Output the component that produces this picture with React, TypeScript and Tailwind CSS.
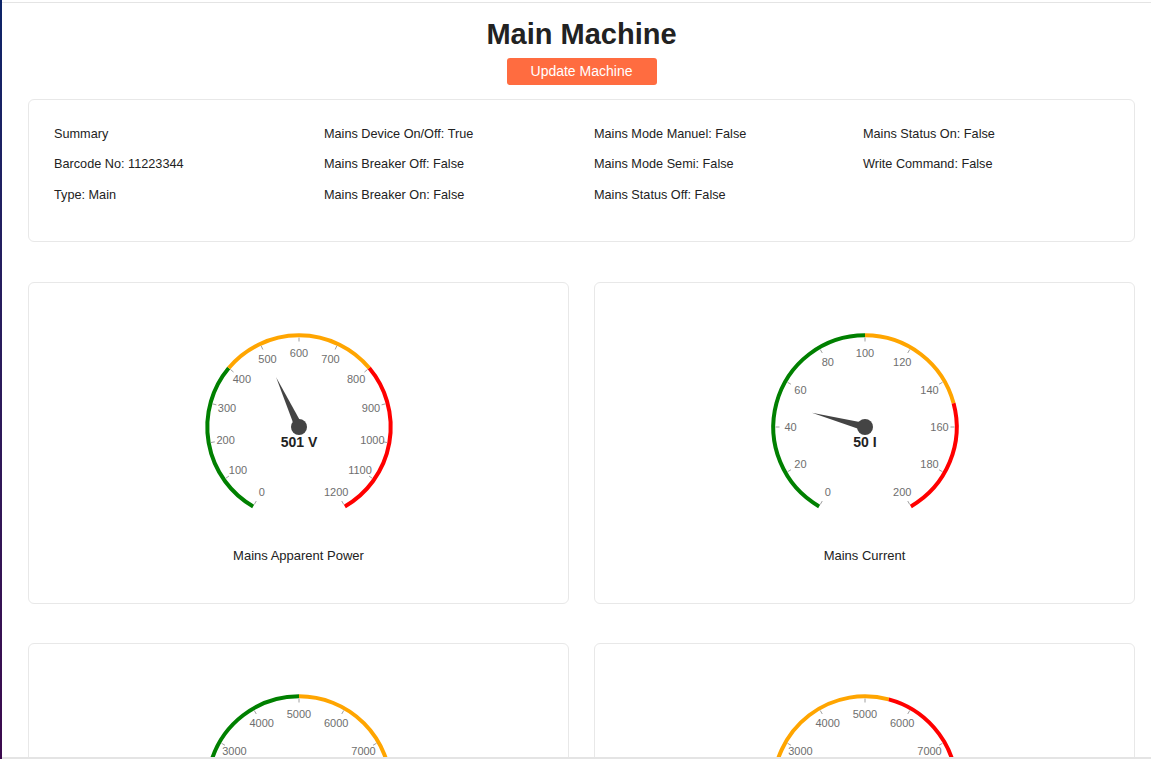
import React from 'react';

type Band = { from: number; to: number; color: string };

type GaugeProps = {
  min: number;
  max: number;
  step: number;
  value: number;
  unit: string;
  bands: Band[];
};

const CX = 100;
const CY = 100;
const START = -150; // degrees from top, clockwise
const SWEEP = 300;

function polar(angle: number, r: number) {
  const rad = (angle * Math.PI) / 180;
  return { x: CX + r * Math.sin(rad), y: CY - r * Math.cos(rad) };
}

function arcPath(a1: number, a2: number, r: number) {
  const p1 = polar(a1, r);
  const p2 = polar(a2, r);
  const large = a2 - a1 > 180 ? 1 : 0;
  return `M ${p1.x} ${p1.y} A ${r} ${r} 0 ${large} 1 ${p2.x} ${p2.y}`;
}

function Gauge({ min, max, step, value, unit, bands }: GaugeProps) {
  const toAngle = (v: number) => START + (SWEEP * (v - min)) / (max - min);
  const ticks: number[] = [];
  for (let v = min; v <= max; v += step) ticks.push(v);

  const a = toAngle(value);
  const tip = polar(a, 55);
  const b1 = polar(a - 90, 4);
  const b2 = polar(a + 90, 4);

  return (
    <svg width={200} height={200} viewBox="0 0 200 200" className="block">
      {bands.map((b) => (
        <path
          key={b.from}
          d={arcPath(toAngle(b.from), toAngle(b.to), 91.7)}
          fill="none"
          stroke={b.color}
          strokeWidth={4}
        />
      ))}
      {ticks.map((t) => {
        const p1 = polar(toAngle(t), 89.5);
        const p2 = polar(toAngle(t), 85.5);
        const lp = polar(toAngle(t), 74.5);
        return (
          <g key={t}>
            <line x1={p1.x} y1={p1.y} x2={p2.x} y2={p2.y} stroke="#a0a0a0" strokeWidth={1} />
            <text
              x={lp.x}
              y={lp.y}
              textAnchor="middle"
              dominantBaseline="central"
              fontSize={11}
              fill="#6e6e6e"
              fontFamily="'Liberation Sans', Arial, sans-serif"
            >
              {t}
            </text>
          </g>
        );
      })}
      <polygon points={`${tip.x},${tip.y} ${b1.x},${b1.y} ${b2.x},${b2.y}`} fill="#444" />
      <circle cx={CX} cy={CY} r={8} fill="#444" />
      <text
        x={CX}
        y={CY + 20}
        textAnchor="middle"
        fontSize={14}
        fontWeight={700}
        fill="#222"
        fontFamily="'Liberation Sans', Arial, sans-serif"
      >
        {value} {unit}
      </text>
    </svg>
  );
}

const summary = [
  ['Summary', 'Mains Device On/Off: True', 'Mains Mode Manuel: False', 'Mains Status On: False'],
  ['Barcode No: 11223344', 'Mains Breaker Off: False', 'Mains Mode Semi: False', 'Write Command: False'],
  ['Type: Main', 'Mains Breaker On: False', 'Mains Status Off: False', ''],
];

const gauges: (GaugeProps & { label: string })[] = [
  {
    label: 'Mains Apparent Power',
    min: 0,
    max: 1200,
    step: 100,
    value: 501,
    unit: 'V',
    bands: [
      { from: 0, to: 400, color: 'green' },
      { from: 400, to: 800, color: 'orange' },
      { from: 800, to: 1200, color: 'red' },
    ],
  },
  {
    label: 'Mains Current',
    min: 0,
    max: 200,
    step: 20,
    value: 50,
    unit: 'I',
    bands: [
      { from: 0, to: 100, color: 'green' },
      { from: 100, to: 150, color: 'orange' },
      { from: 150, to: 200, color: 'red' },
    ],
  },
  {
    label: 'Mains Active Power',
    min: 0,
    max: 10000,
    step: 1000,
    value: 0,
    unit: 'W',
    bands: [
      { from: 0, to: 5000, color: 'green' },
      { from: 5000, to: 8000, color: 'orange' },
      { from: 8000, to: 10000, color: 'red' },
    ],
  },
  {
    label: 'Mains Reactive Power',
    min: 0,
    max: 10000,
    step: 1000,
    value: 0,
    unit: 'VAr',
    bands: [
      { from: 0, to: 2000, color: 'green' },
      { from: 2000, to: 5500, color: 'orange' },
      { from: 5500, to: 10000, color: 'red' },
    ],
  },
];

export default function App() {
  return (
    <div className="flex h-[759px] overflow-hidden bg-white font-['Liberation_Sans',Arial,sans-serif] text-[#222]">
      {/* sidebar edge */}
      <div className="w-[2px] shrink-0 bg-gradient-to-b from-[#0c2468] to-[#3c0a4e]" />

      <div className="flex flex-1 flex-col pt-[2px]">
        <div className="flex-1 overflow-hidden border-t border-b-2 border-[#e4e4e4]">
          <main className="pl-[26px] pr-[16px]">
            <div className="flex flex-col items-center pt-[13px]">
              <h1 className="text-[29px] font-bold leading-[36px] text-[#222]">Main Machine</h1>
              <button className="mt-[6px] h-[27px] w-[150px] rounded-[3px] bg-[#ff6c40] text-[14px] text-white">
                Update Machine
              </button>
            </div>

            {/* Summary */}
            <div className="mt-[14px] h-[143px] rounded-[6px] border border-[#e8e8e8] pl-[25px] pt-[19px]">
              <div className="grid grid-cols-[270px_270px_269px_1fr] text-[12.7px]">
                {summary.map((row, i) =>
                  row.map((cell, j) => (
                    <div key={`${i}-${j}`} className="flex h-[30.5px] items-center">
                      {cell}
                    </div>
                  ))
                )}
              </div>
            </div>

            {/* Gauges */}
            <div className="mt-[40px] grid grid-cols-2 gap-x-[25px] gap-y-[39px]">
              {gauges.map((g) => (
                <div
                  key={g.label}
                  className="flex h-[322px] flex-col items-center rounded-[6px] border border-[#e8e8e8] pt-[44px]"
                >
                  <Gauge {...g} />
                  <div className="mt-[21px] text-[13px] leading-[16px]">{g.label}</div>
                </div>
              ))}
            </div>
          </main>
        </div>
      </div>
    </div>
  );
}
